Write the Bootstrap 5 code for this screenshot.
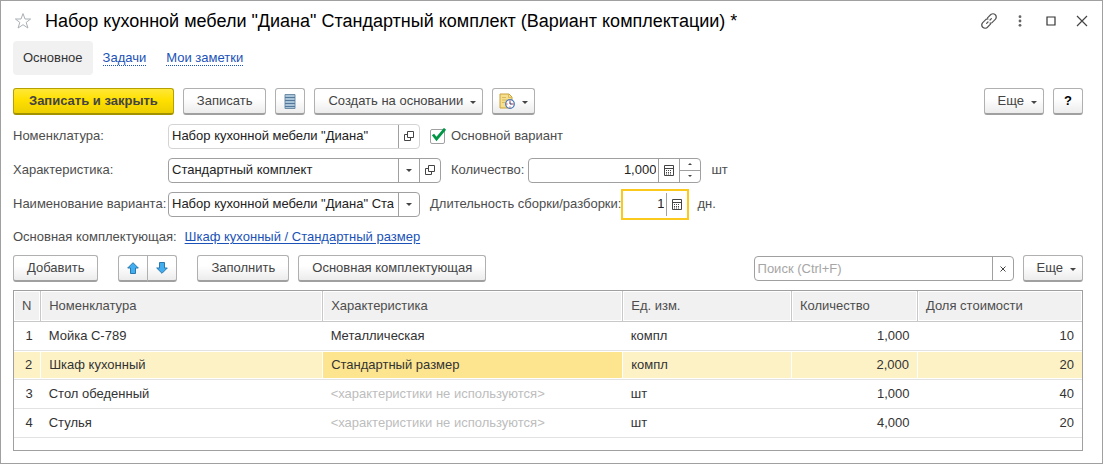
<!DOCTYPE html>
<html lang="ru">
<head>
<meta charset="utf-8">
<meta name="viewport" content="width=device-width, initial-scale=1">
<title>Набор кухонной мебели "Диана" Стандартный комплект</title>
<link href="https://cdn.jsdelivr.net/npm/bootstrap@5.3.0/dist/css/bootstrap.min.css" rel="stylesheet">
<style>
body { font-family: "Liberation Sans", Arial, sans-serif; font-size: 13px; line-height: 16px; color: #333; background: #fff; }
.win { min-height: 100vh; border: 1px solid #a0a0a0; padding: 0 19px 12px 12px; }
.titlebar { height: 40px; margin-right: -9px; }
.titlebar h1 { font-size: 18px; line-height: 24px; color: #000; margin: 0; font-weight: 400; }
.win-tools { gap: 11px; }
.ico-btn { display: inline-flex; align-items: center; justify-content: center; width: 20px; height: 20px; padding: 0; border: 0; background: none; }
.tabs .nav-link { padding: 9px 10px; border-radius: 4px; color: #1a52b8; text-decoration: none; }
.tabs .nav-link span { border-bottom: 1px dotted #1a52b8; }
.tabs .nav-link.active { background: #f1f1f1; color: #333; }
.tabs .nav-link.active span { border: 0; }
.cmds { gap: 9px; }
.cmds-top { padding: 13px 0 4px; }
.cmds-list { padding: 2px 0 8px; }
.cmd { --bs-btn-color: #444; --bs-btn-font-size: 13px; --bs-btn-line-height: 16px; --bs-btn-padding-y: 4px; --bs-btn-padding-x: 13px;
  --bs-btn-border-color: #b0b0b0; --bs-btn-border-radius: 3px; --bs-btn-hover-border-color: #999; --bs-btn-active-bg: #eee;
  display: inline-flex; align-items: center; justify-content: center; height: 27px; border-bottom: 2px solid #a0a0a0; background-image: linear-gradient(#fff 40%, #ececec); white-space: nowrap; }
.cmd-main { --bs-btn-color: #444; --bs-btn-padding-x: 15px; --bs-btn-border-color: #b5a000; border-bottom-color: #a39200; background-image: linear-gradient(#ffe838, #ffe000 45%, #ecce00); font-weight: 700; }
.cmd-icon { width: 30px; padding-left: 0; padding-right: 0; }
.cmd.dropdown-toggle { padding-right: 6px; }
.cmd.cmd-pic { padding-left: 6px; }
.cmd.dropdown-toggle::after, .tri { display: inline-block; border: 3px solid transparent; border-top-color: #444; border-bottom: 0; margin-left: 7px; margin-top: 2px; vertical-align: 0; }
.tri { margin: 0; }
.tri-up { transform: rotate(180deg); }
.tri-sm { border-width: 2px; border-bottom: 0; }
.lbl { color: #4d4d4d; white-space: nowrap; }
.lbl-col { width: 155px; flex: none; }
.after-field { margin-left: 10px; }
.field { display: flex; height: 25px; border: 1px solid #a0a0a0; border-radius: 4px; background: #fff; flex: none; }
.field input { flex: 1 1 0; min-width: 0; border: 0; padding: 0 0 0 3px; margin: 0 4px 0 0; color: #222; background: transparent; outline: 0; }
.field input::placeholder { color: #a6a6a6; opacity: 1; }
.field button { width: 21px; padding: 0; border: 0; border-left: 1px solid #a0a0a0; background: none; display: flex; align-items: center; justify-content: center; color: #444; }
.field input.num { text-align: right; padding-right: 2px; margin-right: 0; }
.field-soft { border-color: #d4d4d4; }
.field-md { width: 252px; }
.field-lg { width: 273px; }
.field-qty { width: 173px; }
.field-search { width: 260px; }
.field-focus { width: 68px; height: 31px; border: 2px solid #fbc91c; border-radius: 0; padding: 2px 0; }
.stepper { width: 21px; display: flex; flex-direction: column; }
.stepper button { flex: 1; width: auto; }
.stepper button + button { border-top: 1px solid #a0a0a0; }
.frow { display: flex; align-items: center; height: 34px; }
.tick { appearance: none; width: 17px; height: 17px; flex: none; background: url("data:image/svg+xml,%3Csvg xmlns='http://www.w3.org/2000/svg' viewBox='0 0 17 17'%3E%3Crect x='.5' y='1.5' width='14' height='14' rx='1.5' fill='%23fff' stroke='%23a0a0a0'/%3E%3C/svg%3E"); }
.tick:checked { background-image: url("data:image/svg+xml,%3Csvg xmlns='http://www.w3.org/2000/svg' viewBox='0 0 17 17'%3E%3Crect x='.5' y='1.5' width='14' height='14' rx='1.5' fill='%23fff' stroke='%23a0a0a0'/%3E%3Cpath d='M3 6.5L6.5 11L15 .8' fill='none' stroke='%23009646' stroke-width='2.8'/%3E%3C/svg%3E"); }
.ref-link { color: #1a52b8; text-underline-offset: 2px; }
.pair { margin: 0 11px; }
.pair .cmd + .cmd { margin-left: -1px; }
.grid-box { border: 1px solid #a0a0a0; padding-bottom: 12px; }
.grid-box table { table-layout: fixed; margin: 0; --bs-table-color: #333; --bs-table-bg: transparent; }
.grid-box th { height: 30px; padding: 0 8px; font-weight: 400; color: #4d4d4d; background: #f1f1f1; border: 0; border-bottom: 1px solid #c8c8c8; border-right: 1px solid #c8c8c8; box-shadow: inset 0 0 0 1px #fff; vertical-align: middle; white-space: nowrap; }
.grid-box td { height: 29px; padding: 0 8px; border: 0; border-bottom: 1px solid #e2e2e2; vertical-align: middle; color: #333; }
.grid-box th:last-child { border-right: 0; }
.grid-box tr.sel td { background-color: #fdf2c6; box-shadow: inset 0 1px #fff, inset 0 -1px #fff; }
.grid-box tr.sel td:not(:last-child) { border-right: 1px solid #fff; }
.grid-box tr.sel td.cur { background-color: #fde58f; }
.grid-box td.dim { color: #bdbdbd; }
</style>
</head>
<body>
<main class="win">
  <header class="titlebar d-flex align-items-center">
    <button class="ico-btn" type="button" aria-label="В избранное"><svg width="18" height="18" viewBox="0 0 18 18"><path d="M9 1.600L11 7h5.600L12.200 10.400 13.900 16 9 12.700 4.100 16 5.800 10.400 1.400 7H7z" fill="#fff" stroke="#aab0b5"/></svg></button>
    <h1 class="ms-2 ps-1 me-auto text-truncate">Набор кухонной мебели "Диана" Стандартный комплект (Вариант комплектации) *</h1>
    <div class="win-tools d-flex">
      <button class="ico-btn" type="button" aria-label="Ссылка"><svg width="18" height="18" viewBox="0 0 18 18" fill="none" stroke="#555" stroke-width="1.200" stroke-linecap="round"><path d="M7.500 5.800L10.800 2.500Q13.200.900 15.300 2.700 17.200 5 15.500 7.200L12.300 10.400Q11.200 11.200 10 11M10.500 12.200L7.200 15.500Q4.800 17.100 2.700 15.300.800 13 2.500 10.800L5.700 7.600Q6.800 6.800 8 7M6.600 11.400L8 10M10 8L11.400 6.600"/></svg></button>
      <button class="ico-btn" type="button" aria-label="Меню"><svg width="4" height="12" viewBox="0 0 4 12" fill="#666"><circle cx="2" cy="1.700" r="1.400"/><circle cx="2" cy="6" r="1.400"/><circle cx="2" cy="10.300" r="1.400"/></svg></button>
      <button class="ico-btn" type="button" aria-label="Развернуть"><svg width="10" height="10" viewBox="0 0 10 10"><path d="M1 1h8v8H1z" fill="none" stroke="#333" stroke-width="1.200"/></svg></button>
      <button class="ico-btn" type="button" aria-label="Закрыть"><svg width="12" height="12" viewBox="0 0 12 12"><path d="M1 1l10 10M11 1L1 11" stroke="#444" stroke-width="1.200"/></svg></button>
    </div>
  </header>

  <nav class="nav tabs">
    <a class="nav-link active" href="#" aria-current="page"><span>Основное</span></a>
    <a class="nav-link" href="#"><span>Задачи</span></a>
    <a class="nav-link" href="#"><span>Мои заметки</span></a>
  </nav>

  <div class="d-flex cmds cmds-top">
    <button class="btn cmd cmd-main" type="button">Записать и закрыть</button>
    <button class="btn cmd" type="button">Записать</button>
    <button class="btn cmd cmd-icon" type="button" aria-label="Список"><svg width="12" height="15" viewBox="0 0 12 15"><path d="M1 .500h10v14H1z" fill="#a9c3d8" stroke="#6f8fa8"/><path d="M1 3.500h10M1 6.500h10M1 9.500h10M1 12.500h10" stroke="#55799a"/></svg></button>
    <button class="btn cmd dropdown-toggle" type="button">Создать на основании</button>
    <button class="btn cmd cmd-pic dropdown-toggle" type="button" aria-label="Напоминание"><svg width="16" height="16" viewBox="0 0 16 16"><path d="M1 1h9l3 3v11H1z" fill="#f6df8f" stroke="#c9a13b"/><path d="M9.500 1v3.500H13M3 4.500h4M3 7h5M3 9.500h3" fill="none" stroke="#d9b95c"/><circle cx="11" cy="11" r="4.300" fill="#fff" stroke="#4a7cc0" stroke-width="1.300"/><path d="M11 11V8.500M11 11h2.500" stroke="#336"/><path d="M11 7.500v1M11 13.500v1M7.500 11h1M13.500 11h1" stroke="#e02020"/></svg></button>
    <button class="btn cmd dropdown-toggle ms-auto" type="button">Еще</button>
    <button class="btn cmd cmd-icon fw-bold text-black" type="button" aria-label="Справка">?</button>
  </div>

  <form>
    <div class="frow">
      <label class="lbl lbl-col" for="item">Номенклатура:</label>
      <div class="field field-soft field-md"><input id="item" value='Набор кухонной мебели "Диана"'><button type="button" aria-label="Открыть"><svg width="10" height="10" viewBox="0 0 10 10" fill="none" stroke="#444"><path d="M3.500.500h6v6h-6zM3 3.500H.500v6h6V7"/></svg></button></div>
      <input class="tick after-field" type="checkbox" id="mainvar" checked><label class="lbl ms-1" for="mainvar">Основной вариант</label>
    </div>
    <div class="frow">
      <label class="lbl lbl-col" for="char">Характеристика:</label>
      <div class="field field-lg"><input id="char" value="Стандартный комплект"><button type="button" aria-label="Выбрать"><span class="tri"></span></button><button type="button" aria-label="Открыть"><svg width="10" height="10" viewBox="0 0 10 10" fill="none" stroke="#444"><path d="M3.500.500h6v6h-6zM3 3.500H.500v6h6V7"/></svg></button></div>
      <label class="lbl after-field me-1" for="qty">Количество:</label>
      <div class="field field-qty"><input class="num" id="qty" value="1,000"><button type="button" aria-label="Калькулятор"><svg width="10" height="11" viewBox="0 0 10 11"><path d="M.500.500h9v10h-9zM1 3.500h8" fill="none" stroke="#444"/><path d="M2 5.500h6M2 7.500h6M2 9h6" stroke="#444" stroke-dasharray="1 1"/></svg></button><div class="stepper"><button type="button" aria-label="Больше"><span class="tri tri-sm tri-up"></span></button><button type="button" aria-label="Меньше"><span class="tri tri-sm"></span></button></div></div>
      <span class="lbl after-field">шт</span>
    </div>
    <div class="frow">
      <label class="lbl lbl-col" for="vname">Наименование варианта:</label>
      <div class="field field-md"><input id="vname" value='Набор кухонной мебели "Диана" Стандартный комплект'><button type="button" aria-label="Выбрать"><span class="tri"></span></button></div>
      <label class="lbl after-field" for="days">Длительность сборки/разборки:</label>
      <div class="field field-focus"><input class="num" id="days" value="1"><button type="button" aria-label="Калькулятор"><svg width="10" height="11" viewBox="0 0 10 11"><path d="M.500.500h9v10h-9zM1 3.500h8" fill="none" stroke="#444"/><path d="M2 5.500h6M2 7.500h6M2 9h6" stroke="#444" stroke-dasharray="1 1"/></svg></button></div>
      <span class="lbl ms-2">дн.</span>
    </div>
    <div class="py-2"><span class="lbl me-2">Основная комплектующая:</span><a class="ref-link" href="#">Шкаф кухонный / Стандартный размер</a></div>
  </form>

  <div class="d-flex cmds cmds-list">
    <button class="btn cmd" type="button">Добавить</button>
    <div class="btn-group pair">
      <button class="btn cmd cmd-icon" type="button" aria-label="Вверх"><svg width="12" height="12" viewBox="0 0 12 12"><path d="M6 .700L11.300 6H8.500v5.500h-5V6H.700z" fill="#42aef0" stroke="#2b78ad"/></svg></button>
      <button class="btn cmd cmd-icon" type="button" aria-label="Вниз"><svg width="12" height="12" viewBox="0 0 12 12"><path d="M6 11.300L11.300 6H8.500V.500h-5V6H.700z" fill="#42aef0" stroke="#2b78ad"/></svg></button>
    </div>
    <button class="btn cmd" type="button">Заполнить</button>
    <button class="btn cmd" type="button">Основная комплектующая</button>
    <div class="field field-search align-self-center ms-auto"><input type="text" aria-label="Поиск" placeholder="Поиск (Ctrl+F)"><button type="button" aria-label="Очистить"><svg width="6" height="6" viewBox="0 0 6 6"><path d="M.500.500l5 5M5.500.500l-5 5" stroke="#444"/></svg></button></div>
    <button class="btn cmd dropdown-toggle" type="button">Еще</button>
  </div>

  <div class="grid-box">
    <table class="table">
      <colgroup><col style="width:2.500%"><col style="width:26.400%"><col style="width:28.100%"><col style="width:15.800%"><col style="width:11.800%"><col></colgroup>
      <thead><tr><th>N</th><th>Номенклатура</th><th>Характеристика</th><th>Ед. изм.</th><th>Количество</th><th>Доля стоимости</th></tr></thead>
      <tbody>
        <tr><td class="text-end">1</td><td>Мойка С-789</td><td>Металлическая</td><td>компл</td><td class="text-end">1,000</td><td class="text-end">10</td></tr>
        <tr class="sel"><td class="text-end">2</td><td>Шкаф кухонный</td><td class="cur">Стандартный размер</td><td>компл</td><td class="text-end">2,000</td><td class="text-end">20</td></tr>
        <tr><td class="text-end">3</td><td>Стол обеденный</td><td class="dim">&lt;характеристики не используются&gt;</td><td>шт</td><td class="text-end">1,000</td><td class="text-end">40</td></tr>
        <tr><td class="text-end">4</td><td>Стулья</td><td class="dim">&lt;характеристики не используются&gt;</td><td>шт</td><td class="text-end">4,000</td><td class="text-end">20</td></tr>
      </tbody>
    </table>
  </div>
</main>
<script src="https://cdn.jsdelivr.net/npm/bootstrap@5.3.0/dist/js/bootstrap.bundle.min.js"></script>
</body>
</html>
